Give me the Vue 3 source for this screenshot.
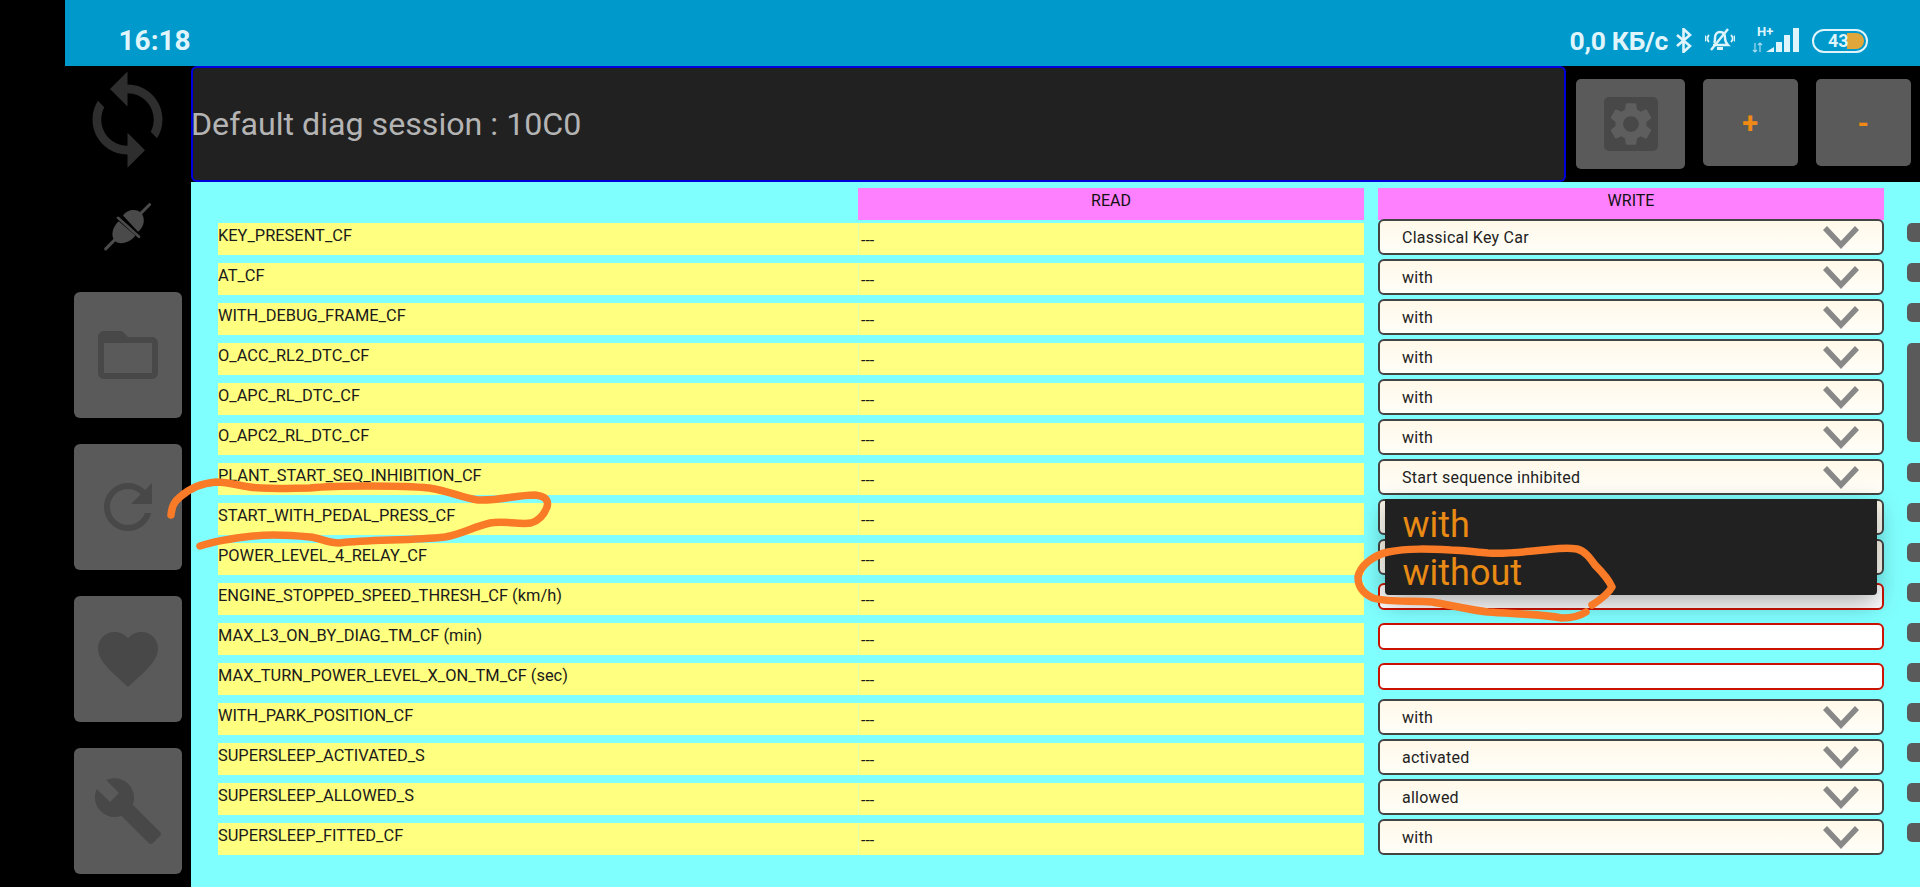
<template>
  <div class="page">
    <div class="gutter"></div>
    <div class="main">
      <div class="statusbar">
        <span class="time">16:18</span>
        <div class="status-right">
          <span class="speed">0,0 КБ/с</span>
          <svg class="bt" width="18" height="25" viewBox="0 0 18 25" fill="none" stroke="#dff5fb" stroke-width="2.6">
            <path d="M2 7l13 11-6.5 6V1L15 7 2 18" />
          </svg>
          <svg class="bell" width="30" height="24" viewBox="0 0 30 24" fill="none" stroke="#dff5fb" stroke-width="2.4">
            <path d="M9 15c1-1 1-3 1-5 0-4 2-6 5-6s5 2 5 6c0 3 1 5 3 7H8" />
            <path d="M12 20.5h6" stroke-width="3" />
            <path d="M6 22L23 1" />
            <path d="M4 7c-2 2-2 5 0 7M1 8c-1 1-1 4 0 5M26 7c2 2 2 5 0 7M29 8c1 1 1 4 0 5" stroke-width="1.8" />
          </svg>
          <div class="net">
            <span class="hplus">H+</span>
            <svg width="48" height="26" viewBox="0 0 48 26" fill="#dff5fb">
              <path d="M3 16v9M1 23l2 2 2-2M8 25v-9M6 18l2-2 2 2" stroke="#a9dcee" stroke-width="1.2" fill="none" />
              <path d="M14 25l8-5v5zM24 25V15h6v10zM32 25V8h6v17zM41 25V1h6v24z" />
            </svg>
          </div>
          <div class="battery">
            <span class="battery-fill"></span>
            <span class="battery-num">43</span>
          </div>
        </div>
      </div>

      <div class="body">
        <aside class="sidebar">
          <div class="sync">
            <svg width="105" height="105" viewBox="0 0 24 24" fill="#2e2e2e">
              <path d="M12 4V1L8 5l4 4V6c3.31 0 6 2.69 6 6 0 1.01-.25 1.97-.7 2.8l1.46 1.46C19.54 15.03 20 13.57 20 12c0-4.42-3.58-8-8-8zm0 14c-3.31 0-6-2.69-6-6 0-1.01.25-1.97.7-2.8L5.24 7.74C4.46 8.97 4 10.43 4 12c0 4.42 3.58 8 8 8v3l4-4-4-4v3z" />
            </svg>
          </div>
          <div class="plug">
            <svg width="50" height="52" viewBox="100 405 150 155" fill="#4a4a4a" stroke="#4a4a4a">
              <path d="M240 415L205 450M108 548L138 518" stroke-width="9" stroke-linecap="round" fill="none" />
              <path d="M145 455L208 512" stroke-width="8" stroke-linecap="round" fill="none" />
              <path stroke="none" d="M160 448C172 428 205 425 218 445C228 465 220 485 205 497Z" />
              <path stroke="none" d="M147 465C125 485 120 520 145 530C165 535 190 520 197 508Z" />
            </svg>
          </div>
          <div class="side-btn first">
            <svg width="72" height="72" viewBox="0 0 24 24" fill="#484848">
              <path fill-rule="evenodd" d="M20 6h-8l-2-2H4c-1.1 0-2 .9-2 2v12c0 1.1.9 2 2 2h16c1.1 0 2-.9 2-2V8c0-1.1-.9-2-2-2zM4 8h16v10H4z" />
            </svg>
          </div>
          <div class="side-btn">
            <svg width="72" height="72" viewBox="0 0 24 24" fill="#484848">
              <path d="M17.65 6.35C16.2 4.9 14.21 4 12 4c-4.42 0-7.99 3.58-7.99 8s3.57 8 7.99 8c3.73 0 6.84-2.55 7.73-6h-2.08c-.82 2.33-3.04 4-5.65 4-3.31 0-6-2.69-6-6s2.69-6 6-6c1.66 0 3.14.69 4.22 1.78L13 11h7V4l-2.35 2.35z" />
            </svg>
          </div>
          <div class="side-btn">
            <svg width="72" height="72" viewBox="0 0 24 24" fill="#484848">
              <path d="M12 21.35l-1.45-1.32C5.4 15.36 2 12.28 2 8.5 2 5.42 4.42 3 7.5 3c1.74 0 3.41.81 4.5 2.09C13.09 3.81 14.76 3 16.5 3 19.58 3 22 5.42 22 8.5c0 3.78-3.4 6.86-8.55 11.54L12 21.35z" />
            </svg>
          </div>
          <div class="side-btn">
            <svg width="72" height="72" viewBox="0 0 24 24" fill="#484848">
              <path d="M22.7 19l-9.1-9.1c.9-2.3.4-5-1.5-6.9-2-2-5-2.4-7.4-1.3L9 6 6 9 1.6 4.7C.4 7.1.9 10.1 2.9 12.1c1.9 1.9 4.6 2.4 6.9 1.5l9.1 9.1c.4.4 1 .4 1.4 0l2.3-2.3c.5-.4.5-1.1.1-1.4z" />
            </svg>
          </div>
        </aside>

        <div class="content">
          <div class="topbar">
            <div class="session">Default diag session : 10C0</div>
            <div class="top-btn gear-btn">
              <div class="gear-box">
                <svg width="52" height="52" viewBox="0 0 24 24" fill="#5e5e5e">
                  <path d="M19.14 12.94c.04-.3.06-.61.06-.94 0-.32-.02-.64-.07-.94l2.03-1.58a.49.49 0 0 0 .12-.61l-1.92-3.32a.488.488 0 0 0-.59-.22l-2.39.96c-.5-.38-1.03-.7-1.62-.94l-.36-2.54a.484.484 0 0 0-.48-.41h-3.84c-.24 0-.43.17-.47.41l-.36 2.54c-.59.24-1.13.57-1.62.94l-2.39-.96c-.22-.08-.47 0-.59.22L2.74 8.87c-.12.21-.08.47.12.61l2.03 1.58c-.05.3-.09.63-.09.94s.02.64.07.94l-2.03 1.58a.49.49 0 0 0-.12.61l1.92 3.32c.12.22.37.29.59.22l2.39-.96c.5.38 1.03.7 1.62.94l.36 2.54c.05.24.24.41.48.41h3.84c.24 0 .44-.17.47-.41l.36-2.54c.59-.24 1.13-.56 1.62-.94l2.39.96c.22.08.47 0 .59-.22l1.92-3.32c.12-.22.07-.47-.12-.61l-2.01-1.58zM12 15.6c-1.98 0-3.6-1.62-3.6-3.6s1.62-3.6 3.6-3.6 3.6 1.62 3.6 3.6-1.62 3.6-3.6 3.6z" />
                </svg>
              </div>
            </div>
            <div class="top-btn zoom-btn">+</div>
            <div class="top-btn zoom-btn">-</div>
          </div>

          <div class="panel">
            <div class="head">
              <div class="head-cell read-head">READ</div>
              <div class="head-cell write-head">WRITE</div>
            </div>
            <div class="rows">
              <div v-for="row in rows" :key="row.name" class="row">
                <div class="cell label">{{ row.name }}</div>
                <div class="cell value">---</div>
                <div class="write">
                  <div v-if="row.type === 'select'" class="select">
                    <span class="select-text">{{ row.value }}</span>
                    <svg class="chev" width="36" height="23" viewBox="0 0 36 23" fill="none" stroke="#888" stroke-width="5.5">
                      <path d="M2 2l16 17L34 2" />
                    </svg>
                  </div>
                  <div v-else class="input"></div>
                </div>
                <div class="side-mark" :class="row.mark"></div>
              </div>
            </div>
          </div>
        </div>
      </div>
    </div>

    <div class="popup">
      <div class="popup-item">with</div>
      <div class="popup-item">without</div>
    </div>

    <svg class="scribble" width="1920" height="887" viewBox="0 0 1920 887" fill="none" stroke="#f97a27" stroke-width="7.5" stroke-linecap="round" stroke-linejoin="round">
      <path d="M171 515C172 505 175 501 180 497C190 488 203 483 216 482C232 482 245 488 261 488C280 489 295 488 310 488C330 486 350 486 367 486C390 486 410 486 429 488C450 491 462 498 478 500C498 501 516 495 535 495C545 496 549 500 547 507C544 515 538 521 531 523C518 525 503 520 490 523C473 527 462 534 445 537C410 541 370 539 339 543C328 543 320 538 310 537C290 535 272 534 253 536C235 538 215 541 200 546" />
      <path d="M1592 605C1600 600 1608 594 1612 587C1608 578 1602 572 1595 565C1590 558 1585 551 1577 549C1565 547 1555 549 1543 550C1525 552 1507 554 1488 553C1475 552 1463 550 1451 550C1430 549 1408 548 1388 552C1372 556 1360 566 1358 577C1358 588 1364 594 1373 598C1390 603 1412 600 1432 602C1450 605 1470 610 1488 612C1515 614 1540 614 1562 618C1572 618 1580 616 1586 612" />
    </svg>
  </div>
</template>

<script setup>
const names = [
  ['KEY_PRESENT_CF', 'select', 'Classical Key Car'],
  ['AT_CF', 'select', 'with'],
  ['WITH_DEBUG_FRAME_CF', 'select', 'with'],
  ['O_ACC_RL2_DTC_CF', 'select', 'with'],
  ['O_APC_RL_DTC_CF', 'select', 'with'],
  ['O_APC2_RL_DTC_CF', 'select', 'with'],
  ['PLANT_START_SEQ_INHIBITION_CF', 'select', 'Start sequence inhibited'],
  ['START_WITH_PEDAL_PRESS_CF', 'select', 'with'],
  ['POWER_LEVEL_4_RELAY_CF', 'select', 'with'],
  ['ENGINE_STOPPED_SPEED_THRESH_CF (km/h)', 'input', ''],
  ['MAX_L3_ON_BY_DIAG_TM_CF (min)', 'input', ''],
  ['MAX_TURN_POWER_LEVEL_X_ON_TM_CF (sec)', 'input', ''],
  ['WITH_PARK_POSITION_CF', 'select', 'with'],
  ['SUPERSLEEP_ACTIVATED_S', 'select', 'activated'],
  ['SUPERSLEEP_ALLOWED_S', 'select', 'allowed'],
  ['SUPERSLEEP_FITTED_CF', 'select', 'with'],
]

// the long dark mark covers rows 4-6
const rows = names.map(([name, type, value], i) => ({
  name,
  type,
  value,
  mark: i === 3 ? 'tall' : i === 4 || i === 5 ? 'none' : '',
}))
</script>

<style scoped>
.page {
  position: relative;
  display: flex;
  width: 1920px;
  height: 887px;
  overflow: hidden;
  background: #000;
  font-family: Roboto, "Liberation Sans", sans-serif;
}
.gutter {
  width: 64.5px;
  flex-shrink: 0;
}
.main {
  flex: 1;
  display: flex;
  flex-direction: column;
  min-width: 0;
}
.statusbar {
  height: 66px;
  flex-shrink: 0;
  display: flex;
  align-items: center;
  justify-content: space-between;
  padding: 14px 52px 0 54px;
  box-sizing: border-box;
  background: #0099cc;
  color: #dff5fb;
}
.time {
  font-size: 28px;
  font-weight: 700;
}
.status-right {
  display: flex;
  align-items: center;
}
.speed {
  font-size: 26.5px;
  font-weight: 700;
  letter-spacing: -0.3px;
}
.bt { margin-left: 7px; }
.bell { margin-left: 12px; }
.net {
  position: relative;
  margin-left: 17px;
  width: 48px;
  height: 26px;
}
.hplus {
  position: absolute;
  top: -1px;
  left: 5px;
  font-size: 13px;
  font-weight: 700;
  line-height: 12px;
}
.battery {
  position: relative;
  width: 56px;
  height: 24px;
  margin-left: 12px;
  margin-top: 2px;
  box-sizing: border-box;
  border: 2px solid #dff5fb;
  border-radius: 12px;
}
.battery-fill {
  position: absolute;
  left: 33px;
  top: 2px;
  bottom: 2px;
  right: 2px;
  background: #dfa63c;
  border-radius: 0 8px 8px 0;
}
.battery-num {
  position: absolute;
  left: 14px;
  top: 0;
  font-size: 18px;
  line-height: 20px;
  font-weight: 700;
}
.body {
  flex: 1;
  display: flex;
  min-height: 0;
}
.sidebar {
  width: 126.5px;
  flex-shrink: 0;
  box-sizing: border-box;
  padding-left: 9px;
  display: flex;
  flex-direction: column;
}
.sync {
  height: 106px;
  width: 108.5px;
  display: flex;
  align-items: center;
  justify-content: center;
}
.plug {
  height: 52px;
  width: 108.5px;
  margin-top: 29px;
  display: flex;
  justify-content: center;
}
.side-btn {
  width: 108.5px;
  height: 126px;
  margin-top: 26px;
  flex-shrink: 0;
  display: flex;
  align-items: center;
  justify-content: center;
  background: #5a5a5a;
  border-radius: 6px;
}
.side-btn.first { margin-top: 39px; }
.content {
  flex: 1;
  min-width: 0;
  display: flex;
  flex-direction: column;
}
.topbar {
  height: 116px;
  flex-shrink: 0;
  display: flex;
  align-items: flex-start;
}
.session {
  width: 1375px;
  height: 116px;
  display: flex;
  align-items: center;
  background: #212121;
  box-shadow: inset 0 0 0 2px #0000dd;
  border-radius: 6px;
  font-size: 32.2px;
  color: #b4b4b4;
}
.top-btn {
  display: flex;
  align-items: center;
  justify-content: center;
  margin-top: 13px;
  background: #5a5a5a;
  border-radius: 5px;
}
.gear-btn {
  width: 109px;
  height: 90px;
  margin-left: 10px;
}
.gear-box {
  width: 54px;
  height: 54px;
  display: flex;
  align-items: center;
  justify-content: center;
  background: #484848;
  border-radius: 5px;
}
.zoom-btn {
  width: 95.5px;
  height: 87px;
  margin-left: 17.5px;
  color: #f08a14;
  font-size: 29px;
  font-weight: 700;
}
.panel {
  flex: 1;
  min-height: 0;
  background: #80ffff;
  padding: 6px 0 0 27px;
}
.head {
  display: flex;
  height: 32px;
  margin-left: 640px;
}
.head-cell {
  width: 506px;
  background: #ff80ff;
  color: #111;
  text-align: center;
  font-size: 16px;
  line-height: 25px;
}
.write-head { margin-left: 14px; }
.rows {
  display: flex;
  flex-direction: column;
  gap: 7.84px;
  margin-top: 2.7px;
}
.row {
  display: flex;
  height: 32.2px;
}
.cell {
  background: #ffff80;
  color: #1a1a1a;
  font-size: 16.4px;
  box-sizing: border-box;
}
.label {
  width: 640px;
  line-height: 25px;
  white-space: nowrap;
}
.value {
  width: 506px;
  padding-left: 2px;
  line-height: 36px;
  font-size: 16px;
  border-left: 1px solid #e6ffb0;
}
.write {
  position: relative;
  width: 506px;
  margin-left: 14px;
}
.select {
  position: absolute;
  left: 0;
  right: 0;
  top: -4px;
  height: 36px;
  box-sizing: border-box;
  display: flex;
  align-items: center;
  justify-content: space-between;
  padding: 0 23px 0 22px;
  background: linear-gradient(#fff9ea, #fffef8);
  border: 2.5px solid #444;
  border-radius: 6px;
  font-size: 16px;
  color: #222;
  letter-spacing: 0.25px;
}
.select-text { margin-top: 2px; }
.chev { margin-top: 1px; }
.input {
  height: 27px;
  box-sizing: border-box;
  background: #fff;
  border: 2.5px solid #cc1100;
  border-radius: 6px;
}
.side-mark {
  width: 13px;
  height: 19px;
  margin-left: 23px;
  flex-shrink: 0;
  background: #5a5a5a;
  border-radius: 5px 0 0 5px;
}
.side-mark.tall { height: 99px; }
.side-mark.none { background: transparent; }
.popup {
  position: absolute;
  left: 1384.5px;
  top: 499px;
  width: 492px;
  height: 96px;
  background: #212121;
  border-radius: 0 0 4px 4px;
  box-shadow: 0 8px 26px rgba(0, 0, 0, 0.32);
}
.popup-item {
  height: 48px;
  padding-left: 18px;
  line-height: 52px;
  font-size: 36px;
  color: #e88a14;
}
.scribble {
  position: absolute;
  left: 0;
  top: 0;
  pointer-events: none;
}
</style>
